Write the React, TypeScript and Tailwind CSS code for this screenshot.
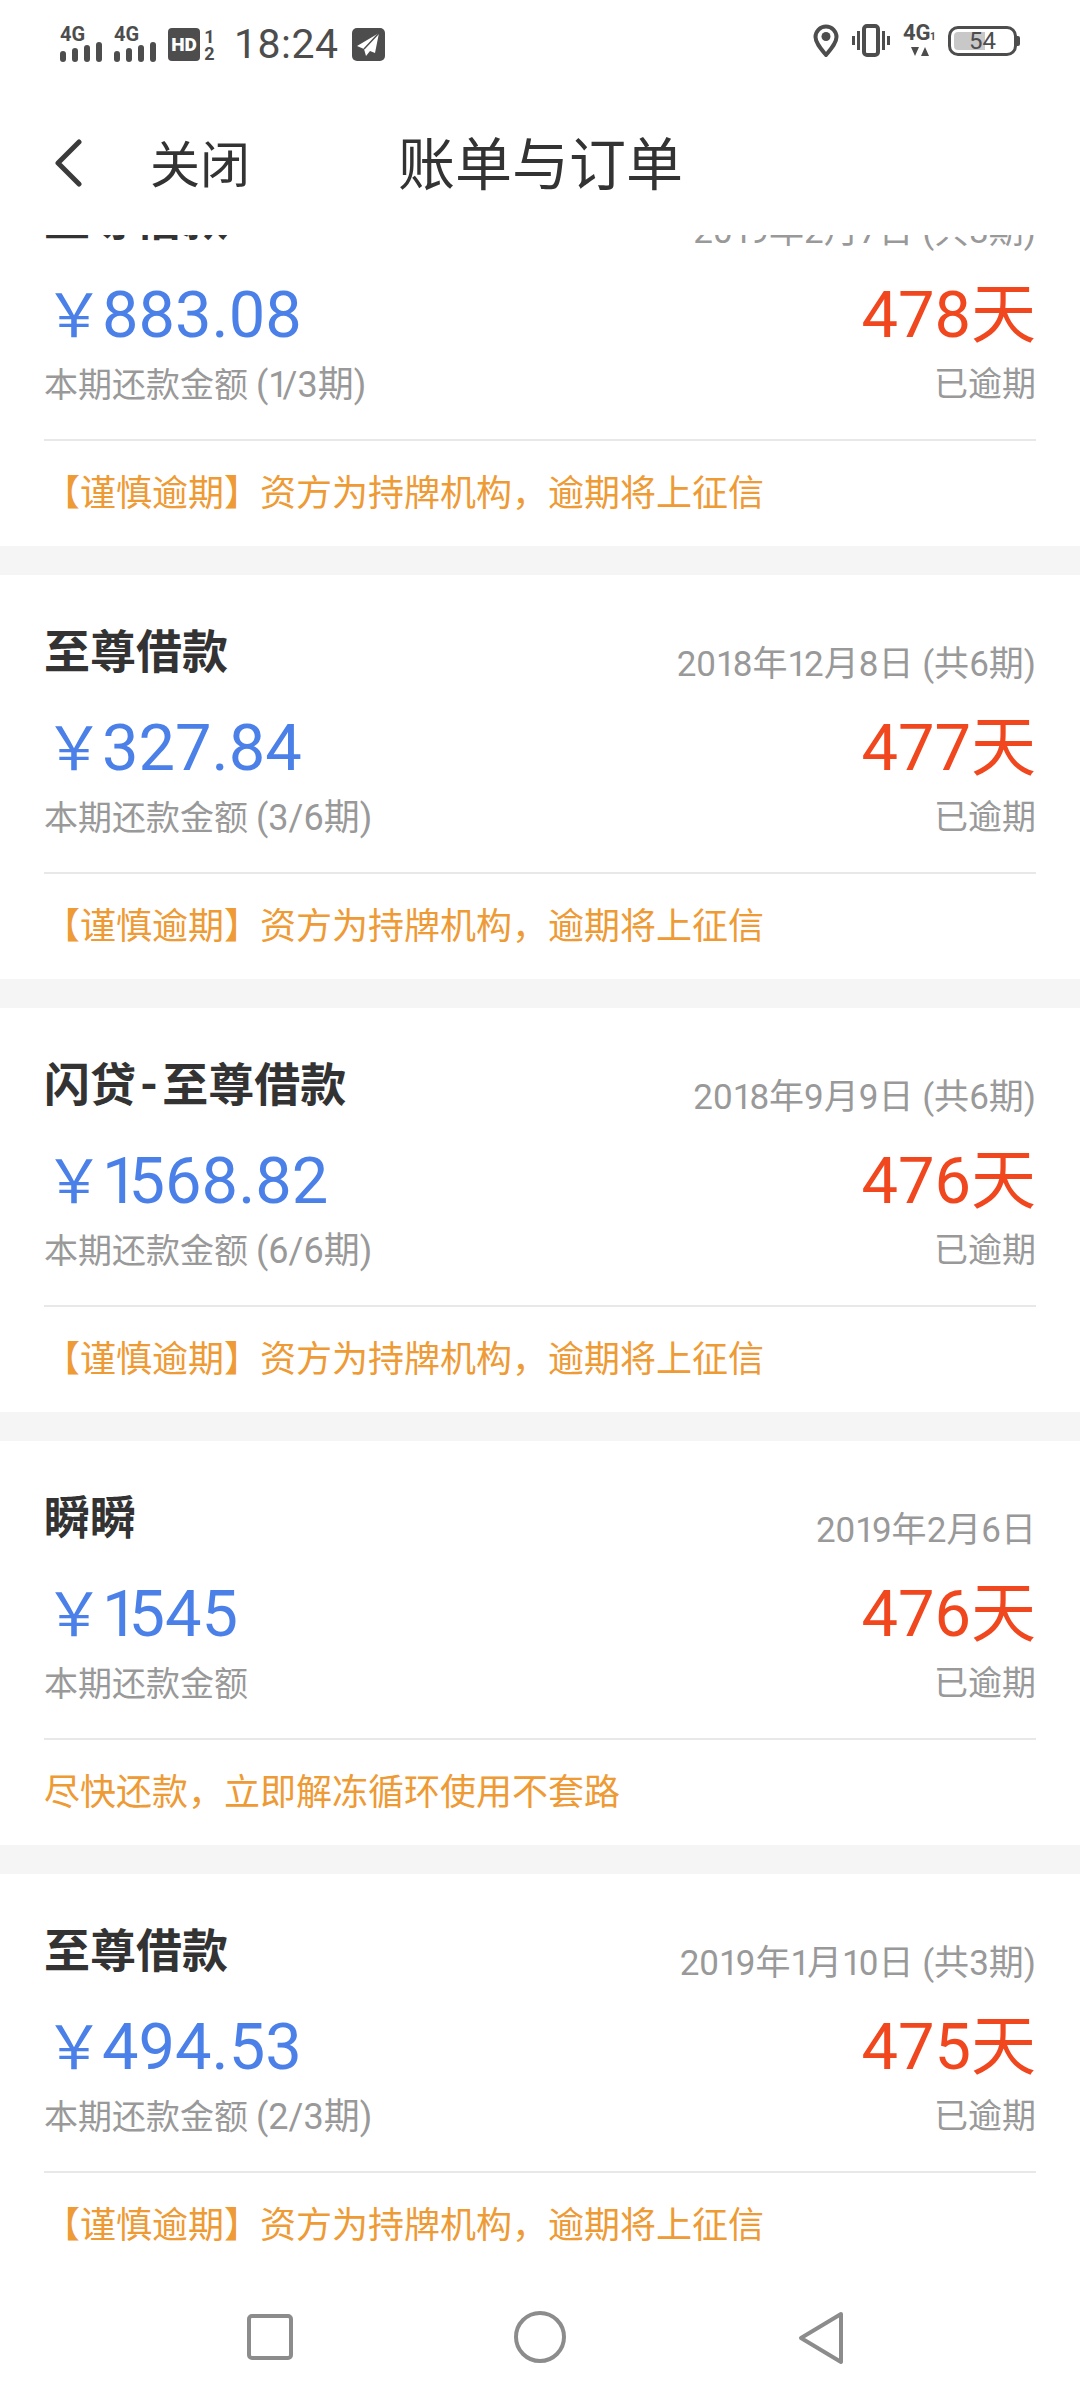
const bills = [
  { title: "至尊借款", date: "2019年2月7日 (共3期)", amount: "883.08", days: "478", period: "(1/3期)", tip: "【谨慎逾期】资方为持牌机构，逾期将上征信" },
  { title: "至尊借款", date: "2018年12月8日 (共6期)", amount: "327.84", days: "477", period: "(3/6期)", tip: "【谨慎逾期】资方为持牌机构，逾期将上征信" },
  { title: "闪贷-至尊借款", date: "2018年9月9日 (共6期)", amount: "1568.82", days: "476", period: "(6/6期)", tip: "【谨慎逾期】资方为持牌机构，逾期将上征信" },
  { title: "瞬瞬", date: "2019年2月6日", amount: "1545", days: "476", period: "", tip: "尽快还款，立即解冻循环使用不套路" },
  { title: "至尊借款", date: "2019年1月10日 (共3期)", amount: "494.53", days: "475", period: "(2/3期)", tip: "【谨慎逾期】资方为持牌机构，逾期将上征信" },
];

function Signal() {
  return (
    <svg className="overflow-visible" width="42" height="36" viewBox="0 0 42 36" fill="#4d4d4d">
      <text x="0" y="14" fontSize="20" fontWeight="700" fontFamily="Roboto, sans-serif">4G</text>
      <rect x="0" y="24" width="6" height="11" rx="3" />
      <rect x="12" y="21" width="6" height="14" rx="3" />
      <rect x="24" y="18" width="6" height="17" rx="3" />
      <rect x="36" y="15" width="6" height="20" rx="3" />
    </svg>
  );
}

function StatusBar() {
  return (
    <div className="flex h-[86px] items-start justify-between pt-[24px] pl-[60px] pr-[60px] text-[#4d4d4d]">
      <div className="flex items-center">
        <Signal />
        <div className="ml-[12px]">
          <Signal />
        </div>
        <div className="ml-[12px] flex h-[33px] w-[32px] items-center justify-center rounded-[4px] bg-[#4d4d4d] text-[19px] leading-none font-black text-white">
          HD
        </div>
        <div className="ml-[3px] flex w-[13px] flex-col items-center text-[18px] leading-[17px] font-bold">
          <span>1</span>
          <span>2</span>
        </div>
        <span className="ml-[18px] text-[41px] leading-none tracking-[0.5px]">18:24</span>
        <svg className="ml-[13px]" width="33" height="33" viewBox="0 0 33 33">
          <rect width="33" height="33" rx="5" fill="#4d4d4d" />
          <path d="M27 5 L5 18 L12 21 L14 28 L18 23 L23 25 Z" fill="#fff" />
          <path d="M27 5 L12 21" stroke="#4d4d4d" strokeWidth="1.5" />
        </svg>
      </div>
      <div className="flex items-center">
        <svg width="26" height="33" viewBox="0 0 26 33" fill="none">
          <path d="M13 31 C8 25 2.5 19 2.5 13 A10.5 10.5 0 0 1 23.5 13 C23.5 19 18 25 13 31 Z" stroke="#4d4d4d" strokeWidth="4" strokeLinejoin="round" />
          <circle cx="13" cy="12.5" r="4.5" fill="#4d4d4d" />
        </svg>
        <svg className="ml-[13px]" width="38" height="33" viewBox="0 0 38 33" fill="none" stroke="#4d4d4d">
          <rect x="12" y="2" width="14" height="29" rx="3" strokeWidth="4" />
          <path d="M1.5 12 V21 M36.5 12 V21 M6.5 7 V26 M31.5 7 V26" strokeWidth="3" />
        </svg>
        <svg className="ml-[13px] overflow-visible" width="33" height="33" viewBox="0 0 33 33" fill="#4d4d4d">
          <text x="0" y="16" fontSize="22" fontWeight="700" fontFamily="Roboto, sans-serif">4G</text>
          <text x="27" y="16" fontSize="10" fontWeight="700" fontFamily="Roboto, sans-serif">1</text>
          <path d="M8 23 H16 L12 32 Z M18 32 H26 L22 23 Z" />
        </svg>
        <div className="ml-[12px] flex items-center">
          <div className="relative flex h-[30px] w-[69px] items-center rounded-[10px] border-[3px] border-[#4d4d4d] p-[3px]">
            <div className="h-full w-[31px] rounded-l-[4px] bg-[#c8c8c8]" />
            <span className="absolute inset-0 flex items-center justify-center text-[24px] leading-none">54</span>
          </div>
          <div className="h-[10px] w-[3px] rounded-r-[2px] bg-[#4d4d4d]" />
        </div>
      </div>
    </div>
  );
}

function Header() {
  return (
    <div className="flex h-[149px] items-start bg-white text-[#333333]">
      <svg className="mt-[53px] ml-[52px]" width="32" height="48" viewBox="0 0 32 48" fill="none">
        <path d="M27 3 L6 24 L27 45" stroke="#3b3b3b" strokeWidth="5" strokeLinecap="round" strokeLinejoin="round" />
      </svg>
      <span className="mt-[50px] ml-[66px] text-[50px] leading-[60px]">关闭</span>
      <span className="mt-[50px] ml-[148px] text-[57px] leading-[60px]">账单与订单</span>
    </div>
  );
}

// the screenshot's digits have a narrow 1, Roboto's are all one width
function NarrowOnes({ value, oneClass }: { value: string; oneClass: string }) {
  return (
    <>
      {value.split("").map((ch, i) =>
        ch === "1" ? (
          <span key={i} className={oneClass}>
            1
          </span>
        ) : (
          ch
        ),
      )}
    </>
  );
}

function Title({ value }: { value: string }) {
  const parts = value.split("-");
  if (parts.length < 2) return <>{value}</>;
  return (
    <>
      {parts[0]}
      <span className="mx-[4px]">-</span>
      {parts[1]}
    </>
  );
}

function BillCard({ bill, first }: { bill: (typeof bills)[number]; first?: boolean }) {
  return (
    <div className={`h-[404px] shrink-0 bg-white px-[44px] ${first ? "-mt-[93px]" : "mt-[29px]"}`}>
      <div className="flex h-[154px] items-center justify-between">
        <span className="text-[46px] leading-none font-bold text-[#333333]">
          <Title value={bill.title} />
        </span>
        <span className="mt-[24px] text-[35px] leading-none text-[#999999]">
          <NarrowOnes value={bill.date} oneClass="tracking-[-3px]" />
        </span>
      </div>
      <div className="-mt-[16px] flex h-[70px] items-center justify-between">
        <span className="text-[65px] leading-none text-[#4a80e8]">
          <span className="text-[60px] tracking-[-2px]">￥</span>
          <NarrowOnes value={bill.amount} oneClass="tracking-[-10px]" />
        </span>
        <span className="text-[65px] leading-none text-[#f0471f]">{bill.days}天</span>
      </div>
      <div className="flex h-[70px] items-center justify-between">
        <span className="text-[34px] leading-none text-[#999999]">
          本期还款金额
          {bill.period ? (
            <span className="ml-[8px] text-[36px]">
              <NarrowOnes value={bill.period} oneClass="tracking-[-6px]" />
            </span>
          ) : null}
        </span>
        <span className="-mt-[3px] text-[34px] leading-none text-[#999999]">已逾期</span>
      </div>
      <div className="mt-[19px] h-[2px] bg-[#e8e8e8]" />
      <div className="flex h-[105px] items-center text-[36px] leading-none text-[#ee9a35]">{bill.tip}</div>
    </div>
  );
}

function NavBar() {
  return (
    <div className="flex h-[110px] shrink-0 items-start bg-white pt-[21px] pl-[247px]">
      <svg width="46" height="46" viewBox="0 0 46 46" className="mt-[3px]" fill="none">
        <rect x="2" y="2" width="42" height="42" rx="3" stroke="#8c8c8c" strokeWidth="4" />
      </svg>
      <svg width="52" height="52" viewBox="0 0 52 52" className="ml-[221px]" fill="none">
        <circle cx="26" cy="26" r="24" stroke="#8c8c8c" strokeWidth="4" />
      </svg>
      <svg width="46" height="54" viewBox="0 0 46 54" className="ml-[232px]" fill="none">
        <path d="M43 3 L3 27 L43 51 Z" stroke="#8c8c8c" strokeWidth="4" strokeLinejoin="round" />
      </svg>
    </div>
  );
}

export default function App() {
  return (
    <div className="flex h-[2400px] w-[1080px] flex-col overflow-hidden bg-white font-['Roboto','Noto_Sans_CJK_SC',sans-serif]">
      <div className="shrink-0 bg-white">
        <StatusBar />
        <Header />
      </div>
      <div className="flex min-h-0 flex-1 flex-col overflow-hidden bg-white">
        <div className="flex flex-col bg-[#f5f5f5]">
          {bills.map((bill, i) => (
            <BillCard key={i} bill={bill} first={i === 0} />
          ))}
        </div>
      </div>
      <NavBar />
    </div>
  );
}
